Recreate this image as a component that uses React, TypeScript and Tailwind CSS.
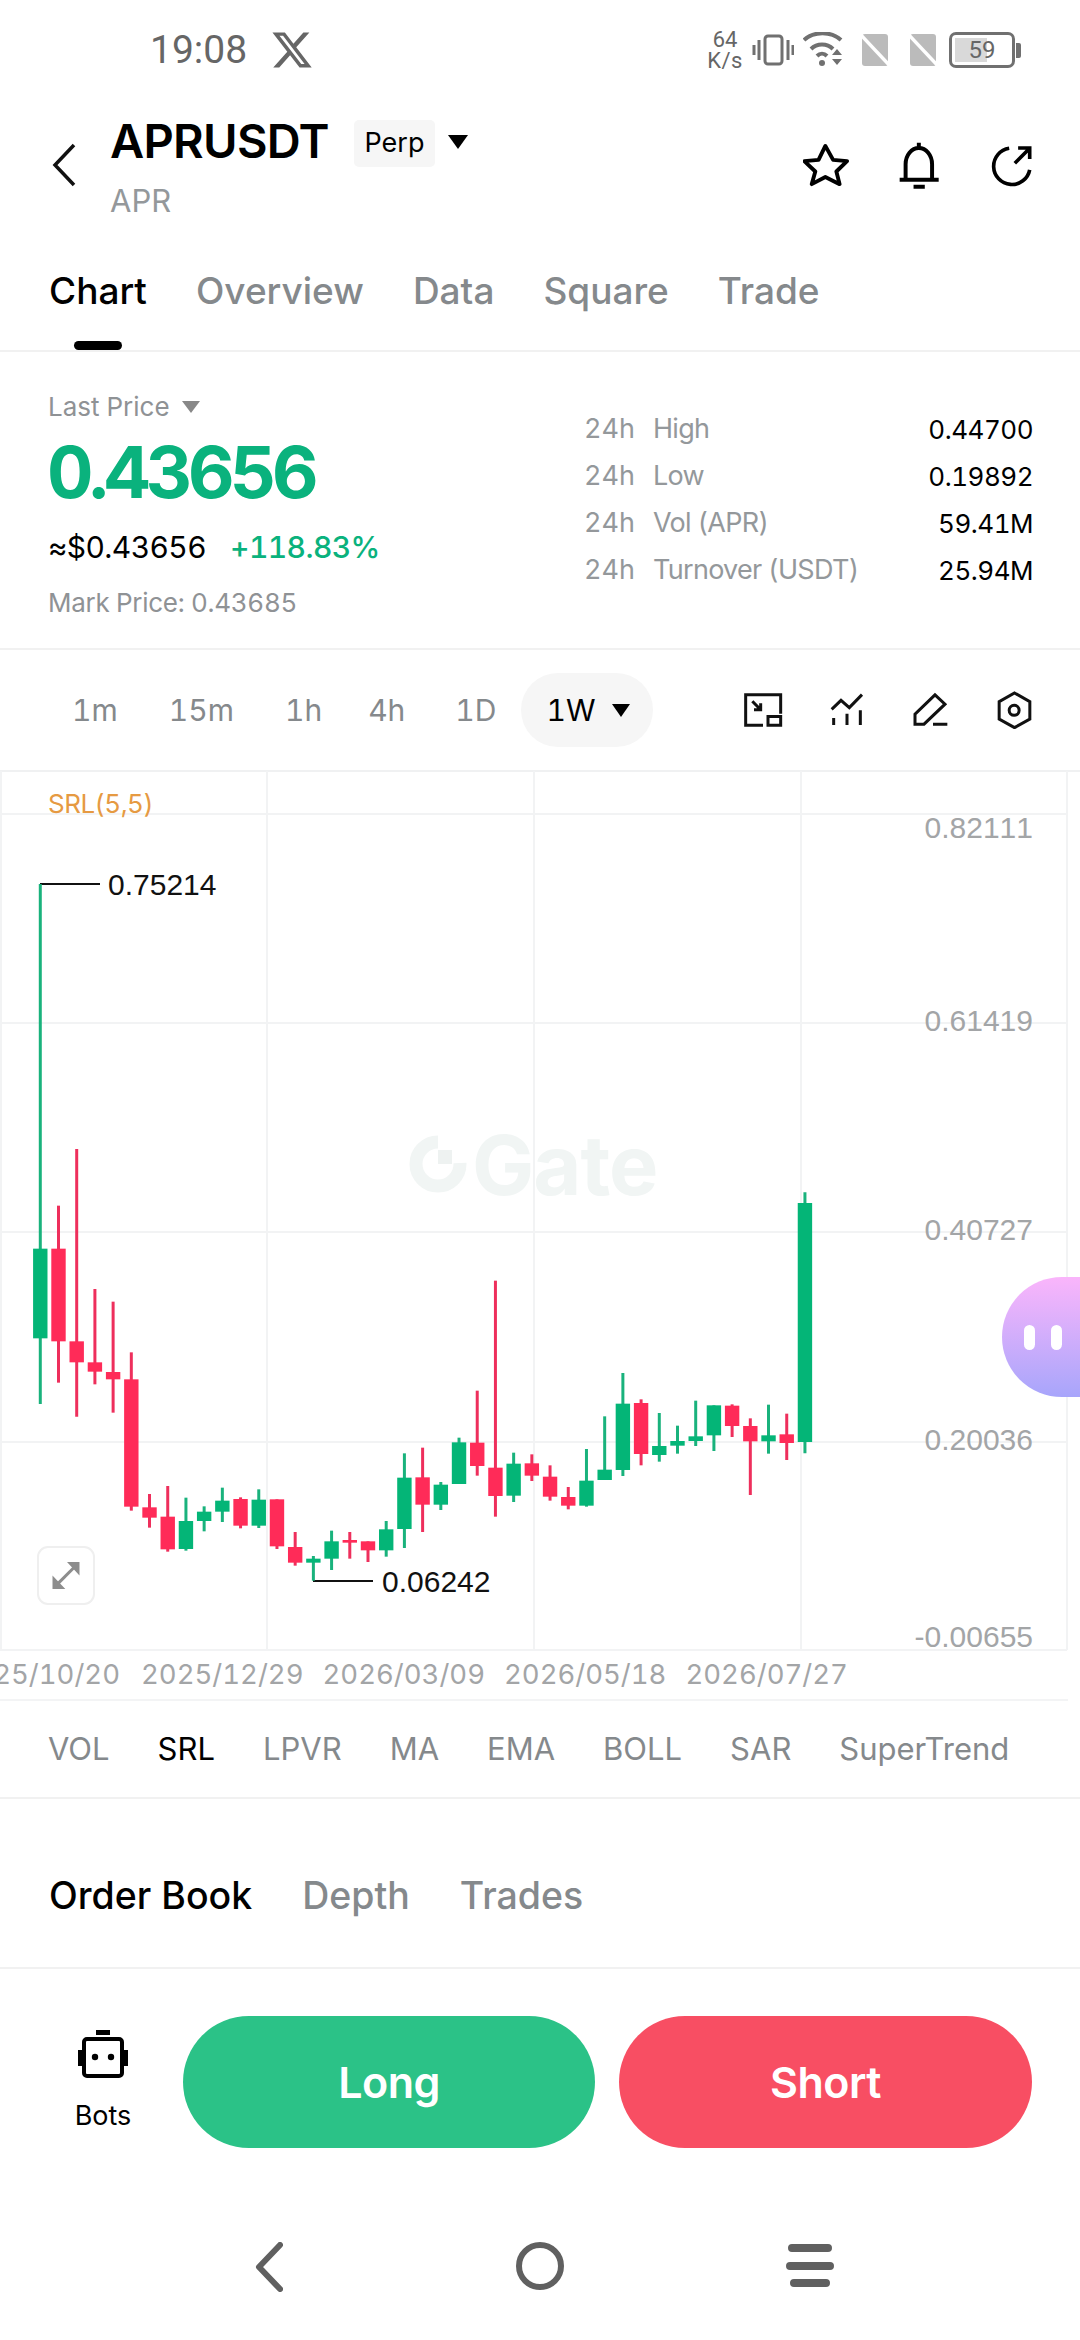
import React from "react";

type C = ["g" | "r", number, number, number, number];
const raw: C[] = [
  ["g", -918, 176, 445, 642], ["r", 47, 176, 454, 578], ["r", -123, 454, 517, 680], ["r", 297, 517, 545, 583],
  ["r", 335, 546, 568, 668], ["r", 487, 568, 950, 962], ["r", 912, 952, 983, 1013], ["r", 888, 980, 1078, 1085],
  ["g", 923, 993, 1077, 1082], ["g", 949, 965, 993, 1024], ["g", 893, 932, 965, 996], ["r", 922, 927, 1007, 1015],
  ["g", 898, 929, 1007, 1014], ["r", 928, 928, 1069, 1077], ["r", 1026, 1071, 1118, 1127], ["g", 1098, 1106, 1118, 1172],
  ["g", 1022, 1054, 1106, 1140], ["r", 1026, 1050, 1058, 1106], ["r", 1054, 1054, 1081, 1116], ["g", 993, 1018, 1081, 1100],
  ["g", 790, 863, 1017, 1074], ["r", 773, 862, 944, 1026], ["g", 876, 884, 944, 960], ["g", 743, 757, 882, 882],
  ["r", 602, 758, 828, 857], ["r", 272, 833, 918, 980], ["g", 788, 821, 917, 936], ["r", 793, 820, 857, 873],
  ["r", 826, 860, 920, 932], ["r", 891, 921, 947, 958], ["g", 777, 872, 947, 950], ["g", 679, 839, 870, 870],
  ["g", 549, 641, 840, 858], ["r", 628, 639, 792, 826], ["g", 669, 768, 795, 815], ["g", 707, 753, 767, 791],
  ["g", 632, 739, 753, 768], ["g", 646, 646, 736, 783], ["r", 643, 647, 708, 741], ["r", 685, 708, 754, 915],
  ["g", 644, 736, 754, 791], ["r", 671, 733, 759, 810], ["g", 7, 39, 756, 790],
];
const Y = (z: number) => 1190 + z / 3;

function Chart() {
  const hLines = [814, 1023, 1232, 1442, 1650];
  const vLines = [1, 267, 534, 801, 1067];
  return (
    <svg viewBox="0 770 1080 882" width={1080} height={882} className="absolute left-0 top-0">
      <line x1={0} x2={1080} y1={771} y2={771} stroke="#f0f1f2" strokeWidth={2} />
      {hLines.map((y) => (
        <line key={y} x1={0} x2={1067} y1={y} y2={y} stroke="#f2f3f4" strokeWidth={2} />
      ))}
      {vLines.map((x) => (
        <line key={x} x1={x} x2={x} y1={771} y2={1650} stroke="#f2f3f4" strokeWidth={2} />
      ))}
      <circle cx={438} cy={1164} r={22} fill="none" stroke="#f1f5f4" strokeWidth={13} strokeDasharray="104 200" transform="rotate(-90 438 1164) scale(1 -1) translate(0 -2328)" />
      <rect x={438} y={1150} width={14} height={14} fill="#eef2f1" />
      <path d="M40 884H100" stroke="#111" strokeWidth={2} fill="none" />
      <path d="M313 1581H373" stroke="#111" strokeWidth={2} fill="none" />
      {raw.map(([c, wt, bt, bb, wb], i) => {
        const x = (117 + i * 52.87) / 2.904;
        const col = c === "g" ? "#04b577" : "#ff2b58";
        const wick = c === "g" ? "#19b27c" : "#ee2f5c";
        return (
          <g key={i}>
            <line x1={x} x2={x} y1={Y(wt)} y2={Y(wb)} stroke={wick} strokeWidth={3} />
            <rect x={x - 7.2} y={Y(bt)} width={14.4} height={Y(bb) - Y(bt)} fill={col} />
          </g>
        );
      })}
    </svg>
  );
}

function Tri({ w, h, color = "#000" }: { w: number; h: number; color?: string }) {
  return (
    <svg width={w} height={h} viewBox="0 0 20 14" preserveAspectRatio="none">
      <path d="M0 0H20L10 14Z" fill={color} />
    </svg>
  );
}

function StatusIcons() {
  return (
    <div className="flex items-center">
      <div className="flex flex-col items-center w-[38px] text-[22px] leading-[21px] text-[#666] font-['Roboto',sans-serif]">
        <span>64</span>
        <span className="tracking-[0.5px]">K/s</span>
      </div>
      <svg width={42} height={32} viewBox="0 0 42 32" className="ml-[8px]">
        <rect x={13} y={2} width={17} height={28} rx={3} fill="none" stroke="#707070" strokeWidth={3} />
        <path d="M7 6V26M2 11V21M36 6V26M41 11V21" stroke="#707070" strokeWidth={3} />
      </svg>
      <svg width={40} height={36} viewBox="0 0 40 36" className="ml-[9px]">
        <path d="M1 8C11 -1 28 -1 38 8" fill="none" stroke="#707070" strokeWidth={4} />
        <path d="M8 17C14 11 24 11 30 17" fill="none" stroke="#707070" strokeWidth={4} />
        <path d="M14 24C17 21 21 21 24 24" fill="none" stroke="#707070" strokeWidth={4} />
        <circle cx={19} cy={31} r={3} fill="#707070" />
        <path d="M29 23H39L34 17ZM29 27H39L34 33Z" fill="#707070" />
      </svg>
      <svg width={32} height={36} viewBox="0 0 32 36" className="ml-[17px]">
        <path d="M5 2H25a3 3 0 0 1 3 3V32a2 2 0 0 1-2 2H5a3 3 0 0 1-3-3V5a3 3 0 0 1 3-3Z" fill="#bbbbbb" />
        <path d="M-1 1L32 36" stroke="#fff" strokeWidth={3.5} />
      </svg>
      <svg width={32} height={36} viewBox="0 0 32 36" className="ml-[16px]">
        <path d="M5 2H25a3 3 0 0 1 3 3V32a2 2 0 0 1-2 2H5a3 3 0 0 1-3-3V5a3 3 0 0 1 3-3Z" fill="#bbbbbb" />
        <path d="M-1 1L32 36" stroke="#fff" strokeWidth={3.5} />
      </svg>
      <div className="ml-[9px] relative w-[66px] h-[36px] rounded-[7px] border-[3px] border-[#707070] flex items-center justify-center">
        <div className="absolute left-[3px] top-[3px] bottom-[3px] w-[32px] bg-[#d9d9d9]" />
        <span className="relative text-[24px] leading-none text-[#666] font-['Roboto',sans-serif]">59</span>
      </div>
      <div className="ml-[1px] w-[5px] h-[15px] rounded-r-[2px] bg-[#707070]" />
    </div>
  );
}

function Tab({ label, active }: { label: string; active?: boolean }) {
  return <span className={active ? "text-black" : "text-[#85898c]"}>{label}</span>;
}

const stats = [
  ["High", "0.44700"],
  ["Low", "0.19892"],
  ["Vol (APR)", "59.41M"],
  ["Turnover (USDT)", "25.94M"],
];

const sans = "font-['Inter','Liberation_Sans',sans-serif]";
const helv = "font-['Liberation_Sans',sans-serif]";

function AxisLabel({ className, children }: { className: string; children: React.ReactNode }) {
  return <div className={`absolute ${helv} [font-kerning:none] text-[30px] leading-[36px] ${className}`}>{children}</div>;
}

export default function App() {
  return (
    <div className={`w-[1080px] h-[2340px] bg-white flex flex-col overflow-hidden tabular-nums ${sans}`}>
      {/* status bar */}
      <div className="h-[100px] shrink-0 flex items-center justify-between pl-[150px] pr-[59px]">
        <div className="flex items-center gap-[25px]">
          <span className="text-[39px] leading-none text-[#666] font-['Roboto',sans-serif]">19:08</span>
          <svg width={40} height={36} viewBox="1 2 22 20" preserveAspectRatio="none">
            <path fillRule="evenodd" fill="#666" d="M18.244 2.25h3.308l-7.227 8.26 8.502 11.24H16.17l-5.214-6.817L4.99 21.75H1.68l7.73-8.835L1.254 2.25H8.08l4.713 6.231zm-1.161 17.52h1.833L7.084 4.126H5.117z" />
          </svg>
        </div>
        <StatusIcons />
      </div>

      {/* header */}
      <div className="h-[136px] shrink-0 flex items-start justify-between pl-[51px] pr-[47px]">
        <div className="flex items-start">
          <svg width={26} height={44} viewBox="0 0 26 44" className="mt-[43px]">
            <path d="M23 2L4 22L23 42" fill="none" stroke="#111" strokeWidth={3.5} />
          </svg>
          <div className="ml-[33px] flex flex-col">
            <div className="flex items-center h-[80px]">
              <span className="text-[47px] leading-none font-semibold tracking-[-0.7px] text-black">APRUSDT</span>
              <span className="ml-[25px] mt-[6px] h-[47px] w-[81px] rounded-[5px] bg-[#f6f6f6] flex items-center justify-center text-[27px] text-black">Perp</span>
              <span className="ml-[13px] mt-[4px]"><Tri w={20} h={14} /></span>
            </div>
            <span className="text-[31px] leading-[36px] mt-[3px] text-[#94989b]">APR</span>
          </div>
        </div>
        <div className="flex items-center mt-[42px]">
          <svg width={46} height={46} viewBox="428 425 142 142">
            <path d="M497 434L521 477L564 481L531 513L541 552L497 530L455 552L466 513L432 481L476 477Z" fill="none" stroke="#000" strokeWidth={12} strokeLinejoin="round" />
          </svg>
          <svg width={43} height={47} viewBox="710 420 130 142" className="ml-[49px]">
            <path d="M773 422V436M733 534V487A40 49 0 0 1 813 487V534M715 534H833M757 555H791" fill="none" stroke="#000" strokeWidth={12} />
          </svg>
          <svg width={43} height={43} viewBox="985 430 130 130" className="ml-[49px]">
            <path d="M1043 443A55 55 0 1 0 1105 508M1060 488L1102 446M1070 442H1105V475" fill="none" stroke="#000" strokeWidth={11} />
          </svg>
        </div>
      </div>

      {/* tabs */}
      <div className="h-[116px] shrink-0 border-b-2 border-[#f1f1f1] pl-[49px] flex gap-[49px] text-[37px] font-medium leading-[109px] relative">
        <div className="relative">
          <Tab label="Chart" active />
          <div className="absolute left-[25px] bottom-[0px] w-[48px] h-[9px] rounded-full bg-black" />
        </div>
        <Tab label="Overview" />
        <Tab label="Data" />
        <Tab label="Square" />
        <Tab label="Trade" />
      </div>

      {/* price */}
      <div className="h-[298px] shrink-0 border-b-2 border-[#f1f1f1] pl-[48px] pr-[47px] flex justify-between">
        <div className="flex flex-col">
          <div className="flex items-center mt-[37px] h-[34px] text-[26px] text-[#8f9295]">
            Last Price
            <span className="ml-[12px] mt-[1px]"><Tri w={18} h={12} color="#888" /></span>
          </div>
          <div className="text-[72px] leading-[72px] mt-[13px] -ml-[1px] font-bold tracking-[-4.5px] text-[#0ab27d]">0.43656</div>
          <div className="flex items-center mt-[19px] h-[40px] text-[30px] tracking-[-0.6px]">
            <span className="text-black">≈$0.43656</span>
            <span className="ml-[24px] font-medium text-[#0ab27d]">+118.83%</span>
          </div>
          <div className="mt-[19px] text-[26px] leading-[34px] text-[#8f9295] tracking-[-0.3px]">Mark Price: 0.43685</div>
        </div>
        <div className="w-[449px] mt-[54px] flex flex-col text-[27px]">
          {stats.map(([k, v]) => (
            <div key={k} className="h-[47px] flex items-center justify-between">
              <div className="flex text-[#94989b]">
                <span className="w-[69px]">24h</span>
                <span className="tracking-[-0.7px]">{k}</span>
              </div>
              <span className="text-black text-[26px] tracking-[-0.5px]">{v}</span>
            </div>
          ))}
        </div>
      </div>

      {/* interval row */}
      <div className="h-[120px] shrink-0 flex items-center justify-between pl-[72px] pr-[48px] text-[30px] text-[#85898c]">
        <div className="flex items-center">
          <span>1m</span>
          <span className="ml-[51px]">15m</span>
          <span className="ml-[51px]">1h</span>
          <span className="ml-[46px]">4h</span>
          <span className="ml-[50px]">1D</span>
          <div className="ml-[25px] w-[132px] h-[74px] rounded-full bg-[#f6f6f6] flex items-center pl-[25px] text-black">
            1W
            <span className="ml-[17px]"><Tri w={18} h={13} /></span>
          </div>
        </div>
        <div className="flex items-center">
          <svg width={40} height={37} viewBox="130 95 120 110">
            <path d="M190 194H138V103H243V160M205 168H243V194H205ZM158 122L183 148M183 128V148H163" fill="none" stroke="#111" strokeWidth={9} />
          </svg>
          <svg width={34} height={34} viewBox="392 98 102 102" className="ml-[47px]">
            <path d="M397 147L425 120L450 142L488 103M403 173V194M443 160V194M483 150V194" fill="none" stroke="#111" strokeWidth={9} />
          </svg>
          <svg width={35} height={36} viewBox="642 95 105 105" className="ml-[49px]">
            <path d="M648 190V160L708 102L738 130L675 190ZM702 190H745" fill="none" stroke="#111" strokeWidth={9} />
          </svg>
          <svg width={35} height={38} viewBox="895 92 104 114" className="ml-[49px]">
            <path d="M947 98L993 124V176L947 202L901 176V124Z" fill="none" stroke="#111" strokeWidth={9} />
            <circle cx={946} cy={150} r={15} fill="none" stroke="#111" strokeWidth={9} />
          </svg>
        </div>
      </div>

      {/* chart */}
      <div className="relative h-[882px] shrink-0 -mb-[1px]">
        <Chart />
        <div className="absolute left-[410px] top-[360px] flex items-center">
          <span className="ml-[62px] text-[83px] leading-[70px] font-bold tracking-[-1px] text-[#f1f5f4]">Gate</span>
        </div>
        <div className="absolute left-[48px] top-[18px] text-[26px] leading-[32px] tracking-[-0.5px] text-[#e69a42]">SRL(5,5)</div>
        <AxisLabel className="left-[108px] top-[97px] text-[#111]">0.75214</AxisLabel>
        <AxisLabel className="left-[382px] top-[794px] text-[#111]">0.06242</AxisLabel>
        <AxisLabel className="right-[47px] top-[40px] text-[#a3a5a7]">0.82111</AxisLabel>
        <AxisLabel className="right-[47px] top-[233px] text-[#a3a5a7]">0.61419</AxisLabel>
        <AxisLabel className="right-[47px] top-[442px] text-[#a3a5a7]">0.40727</AxisLabel>
        <AxisLabel className="right-[47px] top-[652px] text-[#a3a5a7]">0.20036</AxisLabel>
        <AxisLabel className="right-[47px] top-[849px] text-[#a3a5a7]">-0.00655</AxisLabel>
        <div className="absolute left-[37px] top-[776px] w-[58px] h-[59px] rounded-[11px] border-2 border-[#efefef] bg-white flex items-center justify-center">
          <svg width={30} height={29} viewBox="148 1115 88 86">
            <path d="M165 1185L218 1132" stroke="#8d8d8d" strokeWidth={9} />
            <path d="M195 1118H232V1158ZM152 1158V1198H190Z" fill="#8d8d8d" />
          </svg>
        </div>
        <div className="absolute right-0 top-[507px] w-[78px] h-[120px] rounded-l-[60px] bg-gradient-to-b from-[#fab5fb] to-[#a7a5fb] flex items-center pl-[22px] gap-[16px]">
          <div className="w-[11px] h-[25px] rounded-full bg-white" />
          <div className="w-[11px] h-[25px] rounded-full bg-white" />
        </div>
      </div>

      {/* dates */}
      <div className="relative h-[50px] shrink-0 border-b-2 border-[#f3f4f5] w-[1068px] overflow-hidden flex items-center gap-[19px] pl-[141px] text-[27.5px] text-[#a3a5a7]">
        <span className="absolute right-[948px]">2025/10/20</span>
        <span>2025/12/29</span>
        <span>2026/03/09</span>
        <span>2026/05/18</span>
        <span>2026/07/27</span>
      </div>

      {/* indicators */}
      <div className="h-[98px] shrink-0 border-b-2 border-[#f1f1f1] pl-[48px] flex items-center gap-[48px] text-[31px] text-[#85898c]">
        <span>VOL</span>
        <span className="text-black">SRL</span>
        <span>LPVR</span>
        <span>MA</span>
        <span>EMA</span>
        <span>BOLL</span>
        <span>SAR</span>
        <span>SuperTrend</span>
      </div>

      {/* order book */}
      <div className="h-[170px] shrink-0 border-b-2 border-[#f1f1f1] pl-[49px] pt-[26px] flex items-center gap-[50px] text-[37.5px] font-medium text-[#85898c]">
        <span className="text-black">Order Book</span>
        <span>Depth</span>
        <span>Trades</span>
      </div>

      {/* actions */}
      <div className="h-[230px] shrink-0 flex pl-[72px] pr-[48px] pt-[47px]">
        <div className="w-[62px] flex flex-col items-center text-[27px] text-black">
          <svg width={50} height={48} viewBox="0 0 50 48" className="mt-[14px]">
            <rect x={18} y={0} width={14} height={5} fill="#000" />
            <rect x={6} y={9} width={38} height={37} rx={3} fill="none" stroke="#000" strokeWidth={4} />
            <path d="M2 20V36M48 20V36" stroke="#000" strokeWidth={4} />
            <circle cx={17} cy={27} r={3.2} fill="#000" />
            <circle cx={33} cy={27} r={3.2} fill="#000" />
          </svg>
          <span className="mt-[22px] leading-[32px]">Bots</span>
        </div>
        <div className="ml-[49px] w-[412px] h-[132px] rounded-full bg-[#2bc287] flex items-center justify-center text-[43px] font-semibold tracking-[-0.5px] text-white">Long</div>
        <div className="ml-[24px] w-[413px] h-[132px] rounded-full bg-[#f84e63] flex items-center justify-center text-[43px] font-semibold tracking-[-0.5px] text-white">Short</div>
      </div>

      {/* nav */}
      <div className="flex-1 relative flex items-start pt-[43px] pl-[255px]">
        <svg width={28} height={50} viewBox="0 0 28 50">
          <path d="M25 3L4 25L25 47" fill="none" stroke="#606060" strokeWidth={6} strokeLinecap="round" strokeLinejoin="round" />
        </svg>
        <svg width={48} height={48} viewBox="0 0 48 48" className="ml-[233px]">
          <circle cx={24} cy={24} r={21} fill="none" stroke="#606060" strokeWidth={6} />
        </svg>
        <svg width={48} height={48} viewBox="0 0 48 48" className="ml-[222px]">
          <path d="M6 6H42M4 24H44M8 41H40" stroke="#606060" strokeWidth={8} strokeLinecap="round" />
        </svg>
      </div>
    </div>
  );
}
